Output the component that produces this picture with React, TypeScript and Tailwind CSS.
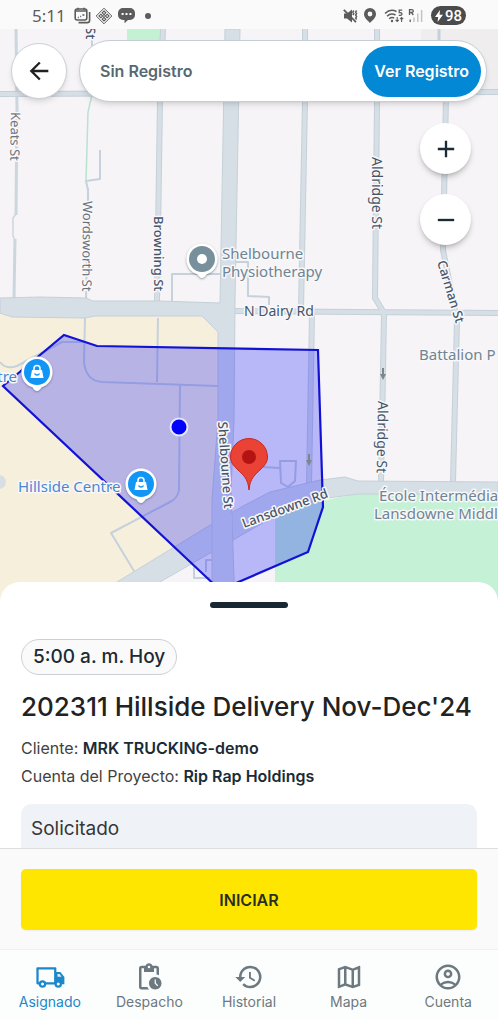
import type { ReactNode } from "react";
import {
  MdAdd,
  MdArrowBack,
  MdHistory,
  MdOutlineAccountCircle,
  MdOutlineMap,
  MdOutlinePendingActions,
  MdRemove,
} from "react-icons/md";

function StatusBar() {
  return (
    <header className="flex h-[29px] shrink-0 items-center justify-between bg-[#fbfafb] px-8 pt-[2px] text-[#5c5c5c]">
      <div className="flex items-center gap-1">
        <span className="mr-1 font-['Noto_Sans',sans-serif] text-[17px] leading-5">5:11</span>
        <svg width="17" height="17" viewBox="0 0 17 17" fill="none" stroke="currentColor" strokeWidth="1.6">
          <rect x="1.2" y="2" width="11.6" height="11" rx="2" />
          <path d="M1.5 4h11M4 .8v2M10 .8v2" />
          <path d="M15.6 5v8.2a2.4 2.4 0 0 1-2.4 2.4H4.5" />
          <path d="M3.8 10.5h1M6.2 9.5h1M8.4 8h2" strokeWidth="1.4" />
        </svg>
        <svg width="18" height="18" viewBox="0 0 18 18" fill="none" stroke="currentColor">
          <path d="M9 1.2 16.8 9 9 16.8 1.2 9Z" strokeWidth="1" />
          <path d="M9 4 10.8 5.8 9 7.600 7.2 5.8ZM5.800 7.2 7.600 9 5.800 10.8 4 9ZM12.200 7.2 14 9 12.200 10.8 10.400 9ZM9 10.400l1.800 1.800L9 14l-1.800-1.800Z" strokeWidth="1.1" />
          <path d="M8.300 9h1.400" strokeWidth="1.4" />
        </svg>
        <svg className="ml-px" width="17" height="17" viewBox="0 0 17 17">
          <path d="M5 1h7a5 5 0 0 1 5 5v2a5 5 0 0 1-5 5h-2l-3.500 3.200V13H5a5 5 0 0 1-5-5V6a5 5 0 0 1 5-5Z" fill="currentColor" />
          <path d="M3.600 7h2M7.500 7h2M11.400 7h2" stroke="#fff" strokeWidth="2" />
        </svg>
        <span className="ml-1.5 size-[6px] rounded-full bg-[#5c5c5c]" />
      </div>
      <div className="flex items-center gap-1">
        <svg width="15" height="16" viewBox="0 0 15 16" fill="none" stroke="currentColor" strokeWidth="1.400">
          <path d="M1 5.500h3l5-4v13L4 10.500H1Z" fill="currentColor" stroke="none" />
          <path d="M.8 1.800 13 14.200" strokeWidth="1.800" />
          <path d="M10.800 2.500l-1 1.500 1 1.500-1 1.500M13.600 2.500l-1 1.500 1 1.500-1 1.500 1 1.500-1 1.500 1 1.500" />
        </svg>
        <svg className="mr-1 ml-0.5" width="12" height="15" viewBox="0 0 12 15">
          <path
            d="M6 0a6 6 0 0 1 6 6c0 3.600-3 5.800-6 9C3 11.800 0 9.600 0 6a6 6 0 0 1 6-6Zm0 3.600a2.400 2.400 0 1 0 0 4.800 2.400 2.400 0 0 0 0-4.800Z"
            fill="currentColor"
            fillRule="evenodd"
          />
        </svg>
        <svg width="20" height="16" viewBox="0 0 20 16" fill="none" stroke="currentColor" strokeWidth="1.5">
          <path d="M1 5.500c3.500-3.400 8-3.800 11.500-2M3 8.300c2.500-2.400 5.800-2.700 8.500-1.300M5.200 10.800c1.600-1.400 3.400-1.600 5-.8" />
          <circle cx="8" cy="13" r="1.2" fill="currentColor" stroke="none" />
          <path d="M18.200 2.200h-3v2.400c3.800-.6 3.800 3.400-.4 2.800" strokeWidth="1.2" />
          <path d="M13.200 9v4.500m-1.600-1.600 1.600 1.600 1.600-1.600M17.600 14V9.500m-1.600 1.600 1.600-1.600 1.600 1.600" strokeWidth="1.1" />
        </svg>
        <svg width="15" height="16" viewBox="0 0 15 16" fill="none" stroke="currentColor" strokeWidth="1.3">
          <path d="M1.500 7V1.600h2c2.400 0 2.400 2.900 0 2.900h-2m2 0L5.300 7" />
          <path d="M2.200 11.500v2.500" />
          <path d="M6 9.500V14M9.800 5.500V14M13.600 2V14" stroke="#c4c4c4" strokeWidth="1.5" />
        </svg>
        <span className="ml-1 flex h-[19px] items-center gap-0.5 rounded-full bg-[#4b4b4b] px-1 text-white">
          <svg width="8" height="12" viewBox="0 0 8 12" fill="currentColor">
            <path d="M5 0 0 7h3.200L2.600 12 8 4.800H4.600Z" />
          </svg>
          <span className="font-['Roboto',sans-serif] text-[15px] leading-4 font-medium">98</span>
        </span>
      </div>
    </header>
  );
}

function PlacePin({ x, y, color, children }: { x: number; y: number; color: string; children: ReactNode }) {
  return (
    <g transform={`translate(${x} ${y})`}>
      <path
        d="M0 19c-1.600 0-2.800-1.200-4.500-3.800C-11 13.500-15.500 7.500-15.500 0a15.500 15.500 0 0 1 31 0c0 7.500-4.500 13.500-11 15.200C2.800 17.800 1.600 19 0 19Z"
        fill="#fff"
        filter="url(#pinShadow)"
      />
      <circle r="13" fill={color} />
      {children}
    </g>
  );
}

function Bag() {
  return (
    <g>
      <path d="M-5-2h10l1.500 8h-13Z" fill="#fff" />
      <path d="M-3-1.500v-2a3 3 0 0 1 6 0v2" fill="none" stroke="#fff" strokeWidth="1.500" />
      <path d="M-2.500 1.500c1 2 4 2 5 0" fill="none" stroke="#1296f5" strokeWidth="1.300" />
    </g>
  );
}

function MapCanvas() {
  return (
    <svg
      className="absolute inset-0 size-full font-['Noto_Sans',sans-serif]"
      viewBox="0 29 498 577"
      preserveAspectRatio="xMidYMin slice"
      role="img"
      aria-label="Mapa"
    >
      <defs>
        <filter id="pinShadow" x="-30%" y="-30%" width="160%" height="160%">
          <feDropShadow dx="0" dy="1" stdDeviation="1" floodColor="#4b5563" floodOpacity="0.6" />
        </filter>
      </defs>
      <rect y="29" width="498" height="577" fill="#f6f4f6" />
      <rect x="421" y="29" width="77" height="64" fill="#efedee" />
      <rect x="127" y="29" width="36" height="30" fill="#c4f0d4" />
      <path d="M0 313 12 317 85 318 95 316H202L219 332V420L212 524 117 582 76 606H0Z" fill="#f6efdc" />
      <path d="M275 511 355 494H498V606H275Z" fill="#c5f1d6" />

      <g fill="none" stroke="#c6d2db" strokeWidth="2" strokeLinejoin="round">
        <path d="M92 29V95M88 190 86 181 100 179V150M88 188V200L86 300M85 318 84 362Q86 381 102 382L218 386M158 318 157 382M180 385 179 490Q178 498 170 502L111 533 134 571" />
        <path d="M0 362Q6 370 17 366L62 342H85M172 301V274H220M236 262H248V296L269 297V305M194 567V578H210M212 560H206V572M262 467 280 468M280 461H296L295 481 288 487 281 483Z" />
      </g>
      <g fill="none" stroke="#cbd6de" strokeWidth="3" strokeLinejoin="round">
        <path d="M16 29 17 110 16 215M15 239 14 298" />
        <path d="M16 214 13 218V236L15 240" strokeWidth="1.500" />
      </g>
      <path d="M92 95 88 112 86 181" fill="none" stroke="#b8e2d0" strokeWidth="1.500" />
      <circle cx="-1" cy="482" r="7" fill="#d7dfe5" />

      <g fill="none" stroke="#c5d0d8" strokeLinejoin="round">
        <g strokeWidth="6">
          <path d="M0 94 498 92M163 29 160 100 157 302M305 29V100L301 311M235 311 498 313M312 312 309 485M377 29V100L375 298 384 313 381 482M446 96 443 250 457 320 453 482" />
          <path d="M439 29V92" strokeWidth="3" />
        </g>
        <g stroke="#d7dfe6" strokeWidth="4">
          <path d="M0 94 498 92M163 29 160 100 157 302M305 29V100L301 311M235 311 498 313M312 312 309 485M377 29V100L375 298 384 313 381 482M446 96 443 250 457 320 453 482" />
        </g>
      </g>
      <g fill="#d7dfe6" stroke="#c5d0d8" strokeWidth="1">
        <path d="M76 606 117 582 212 524 245 505 270 492 320 480 345 477 358 481 498 482V494H358L320 499 275 516 240 536 212 552 160 582 120 606Z" />
        <path d="M0 298 40 297 86 298 93 301 160 301 220 303 225 29H240L235 300 234 420 231 490 235 606H212V500L218 420V332L202 316H95L85 318 12 317 0 313Z" />
      </g>
      <path d="M213 525 232 513 232 540 213 551Z" fill="#d7dfe6" />

      <path
        d="M64 335 97 346 318 350 323 507 308 552 220 590 3 386Z"
        fill="#0000ff"
        fillOpacity="0.250"
        stroke="#1212d4"
        strokeWidth="2.200"
      />

      <g fill="none" stroke="#7d858e" strokeWidth="2">
        <path d="M383 368V377M309 454V463" />
        <path d="M380 374h6l-3 6ZM306 460h6l-3 6Z" fill="#7d858e" stroke="none" />
      </g>

      <g stroke="#f8f7f9" strokeWidth="3" strokeLinejoin="round" paintOrder="stroke">
        <g fill="#6b727c" fontSize="13">
          <text transform="translate(11 112) rotate(91)">Keats St</text>
          <text transform="translate(83 201) rotate(90.500)">Wordsworth St</text>
        </g>
        <g fill="#475569" fontSize="13" fontWeight="500">
          <text transform="translate(86 27) rotate(91)">St</text>
          <text transform="translate(154 216) rotate(90)">Browning St</text>
          <text transform="translate(437 262) rotate(73)">Carman St</text>
          <text transform="translate(218 422) rotate(86)">Shelbourne St</text>
          <text transform="translate(244 528) rotate(-20)">Lansdowne Rd</text>
        </g>
        <g fill="#475569" fontSize="14">
          <text transform="translate(372 157) rotate(90)">Aldridge St</text>
          <text transform="translate(378 401) rotate(91)">Aldridge St</text>
          <text x="244" y="316">N Dairy Rd</text>
        </g>
        <g fill="#6f8593" fontSize="15">
          <text x="222" y="259">Shelbourne</text>
          <text x="222" y="277">Physiotherapy</text>
          <text x="419" y="360">Battalion P</text>
          <text x="379" y="501">École Intermédia</text>
          <text x="374" y="519">Lansdowne Middl</text>
        </g>
        <g fill="#4a88cf" fontSize="15">
          <text x="17" y="382" textAnchor="end">tre</text>
          <text x="18" y="492">Hillside Centre</text>
        </g>
      </g>

      <PlacePin x={202} y={259} color="#78909c">
        <circle r="5" fill="#fff" />
      </PlacePin>
      <PlacePin x={37} y={372} color="#1296f5">
        <Bag />
      </PlacePin>
      <PlacePin x={141} y={484} color="#1296f5">
        <Bag />
      </PlacePin>
      <circle cx="179" cy="427" r="8.500" fill="#0000ff" stroke="#e6e6fa" strokeWidth="2" />
      <path
        d="M249 490C248 478 243 475 237 469 233 465 230.500 462 230.500 457a18.500 18.500 0 0 1 37 0C267.500 462 265 465 261 469 255 475 250 478 249 490Z"
        fill="#ea4335"
        stroke="#c5281f"
        strokeWidth="1"
      />
      <circle cx="249" cy="457" r="7" fill="#b31412" />
    </svg>
  );
}

function TruckIcon({ className }: { className?: string }) {
  return (
    <svg className={className} viewBox="0 0 24 24" fill="none" stroke="currentColor" strokeWidth="1.800">
      <path d="M3.500 17H2V5h14.200v12H8.500" strokeLinejoin="round" />
      <path d="M16.500 8h3.800L23.500 12v5.800h-7Z" fill="currentColor" stroke="none" />
      <path d="M18 9.600h1.700l1.500 2.100H18Z" fill="#dcecf7" stroke="none" />
      <circle cx="6" cy="17.500" r="2.100" fill="#fcfdfd" />
      <circle cx="18.600" cy="17.500" r="2.100" fill="#fcfdfd" />
    </svg>
  );
}

const tabs = [
  { label: "Asignado", Icon: TruckIcon, active: true },
  { label: "Despacho", Icon: MdOutlinePendingActions, active: false },
  { label: "Historial", Icon: MdHistory, active: false },
  { label: "Mapa", Icon: MdOutlineMap, active: false },
  { label: "Cuenta", Icon: MdOutlineAccountCircle, active: false },
];

export default function App() {
  return (
    <div className="flex min-h-screen flex-col bg-white font-['Inter',sans-serif] text-[#1b2b36]">
      <StatusBar />

      <section className="relative min-h-96 flex-1 overflow-hidden">
        <MapCanvas />
        <div className="relative flex items-center gap-3 px-[11px] pt-[11px]">
          <button
            type="button"
            aria-label="Volver"
            className="flex size-14 shrink-0 items-center justify-center rounded-full border border-[#c9d1d7] bg-white text-[#212121] shadow-md"
          >
            <MdArrowBack className="size-7" />
          </button>
          <div className="flex h-[62px] flex-1 items-center justify-between rounded-full border border-[#c3ced5] bg-white pr-[5px] pl-5 shadow-md">
            <span className="text-base font-semibold text-[#566872]">Sin Registro</span>
            <button
              type="button"
              className="h-[51px] rounded-full bg-[#0288d4] px-3 text-base font-semibold text-white"
            >
              Ver Registro
            </button>
          </div>
        </div>
        <div className="relative flex flex-col items-end gap-5 px-[27px] pt-[21px]">
          <button
            type="button"
            aria-label="Acercar"
            className="flex size-[51px] items-center justify-center rounded-full bg-white shadow-md shadow-black/20"
          >
            <MdAdd className="size-7" />
          </button>
          <button
            type="button"
            aria-label="Alejar"
            className="flex size-[51px] items-center justify-center rounded-full bg-white shadow-md shadow-black/20"
          >
            <MdRemove className="size-7" />
          </button>
        </div>
      </section>

      <main className="relative z-10 -mt-6 rounded-t-[20px] bg-white px-[21px] pt-5">
        <div className="mx-auto h-[6px] w-[78px] rounded-full bg-[#172833]" />
        <div className="mt-[31px] flex h-9 w-fit items-center rounded-full border border-[#cbd0d5] bg-[#fafafa] px-[11px] text-[19px] font-medium">
          5:00 a. m. Hoy
        </div>
        <h1 className="mt-4 text-[26px] leading-8 font-medium text-[#222]">202311 Hillside Delivery Nov-Dec'24</h1>
        <p className="mt-[11px] text-base leading-7 text-[#424242]">
          Cliente: <strong className="font-semibold text-[#1b2b36]">MRK TRUCKING-demo</strong>
        </p>
        <p className="text-base leading-7 text-[#424242]">
          Cuenta del Proyecto: <strong className="font-semibold text-[#1b2b36]">Rip Rap Holdings</strong>
        </p>
        <section className="mt-[14px] rounded-t-[10px] bg-[#eff3f8] px-[10px] pt-[11px] pb-[5px]">
          <h2 className="text-[19px] leading-7 text-[#363636]">Solicitado</h2>
        </section>
      </main>

      <div className="border-t border-[#dedede] bg-[#fafafa] px-[21px] pt-5 pb-[19px]">
        <button
          type="button"
          className="h-[61px] w-full rounded-[5px] bg-[#ffe600] text-base font-semibold text-[#263025] shadow-xs"
        >
          INICIAR
        </button>
      </div>

      <nav className="grid grid-cols-5 border-t border-[#f0f0f0] bg-[#fcfdfd] pt-3 pb-2">
        {tabs.map(({ label, Icon, active }) => (
          <a
            key={label}
            href={`#${label.toLowerCase()}`}
            aria-current={active ? "page" : undefined}
            className={
              active
                ? "flex flex-col items-center text-sm leading-5 text-[#1a88cb]"
                : "flex flex-col items-center text-sm leading-5 text-[#6c7980]"
            }
          >
            <Icon className="size-[30px]" />
            {label}
          </a>
        ))}
      </nav>
    </div>
  );
}
